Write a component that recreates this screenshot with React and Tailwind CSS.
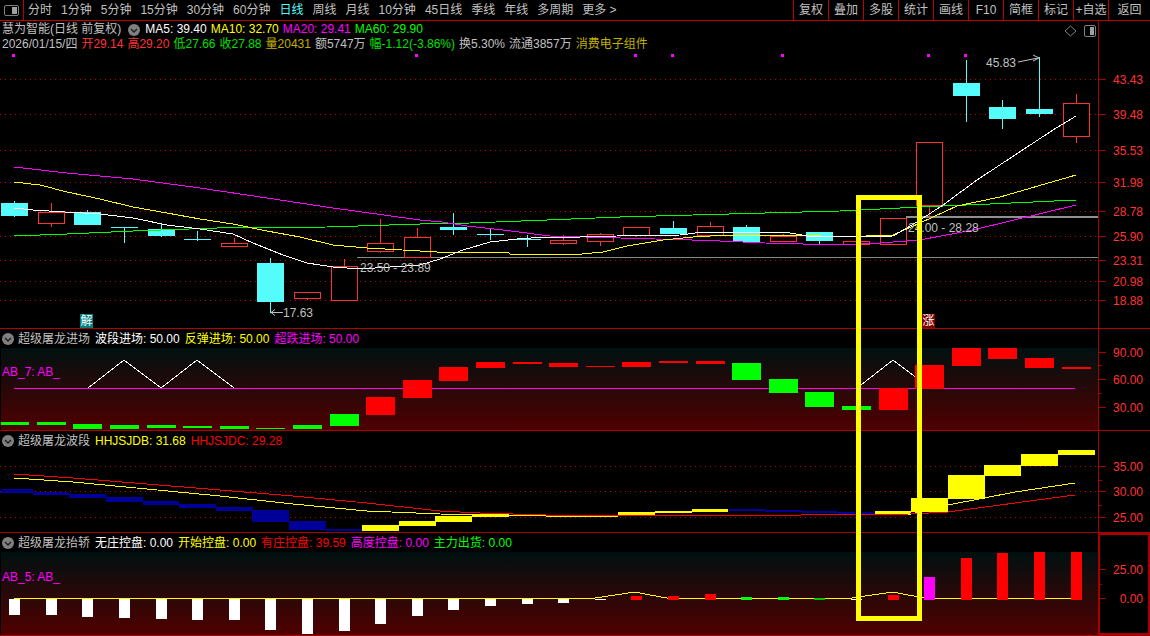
const RED = "#ff3232";
const CYAN = "#54fcfc";
const AXIS = "#a80000";

const tabs = ["分时", "1分钟", "5分钟", "15分钟", "30分钟", "60分钟", "日线", "周线", "月线", "10分钟", "45日线", "季线", "年线", "多周期", "更多 >"];
const tools = ["复权", "叠加", "多股", "统计", "画线", "F10", "简框", "标记", "+自选", "返回"];

// x, body top, body bottom, wick top, wick bottom
const upCandles = [
  [38, 212, 223, 203, 227],
  [221, 243, 246, 238, 246],
  [294, 292, 298, 292, 300],
  [331, 266, 300, 259, 301],
  [367, 243, 251, 219, 253],
  [404, 237, 257, 228, 257],
  [550, 240, 243, 235, 245],
  [587, 234, 241, 233, 246],
  [623, 227, 235, 227, 237],
  [697, 226, 235, 222, 235],
  [770, 236, 241, 234, 242],
  [843, 241, 244, 241, 244],
  [880, 218, 244, 218, 244],
  [916, 142, 205, 142, 219],
  [1063, 103, 136, 94, 143],
];
const downCandles = [
  [1, 203, 216, 201, 217],
  [74, 212, 225, 210, 225],
  [111, 227, 227, 227, 243],
  [148, 229, 236, 223, 237],
  [184, 239, 239, 231, 241],
  [257, 263, 302, 258, 313],
  [440, 227, 230, 213, 235],
  [477, 234, 234, 229, 240],
  [514, 239, 239, 235, 247],
  [660, 228, 234, 221, 234],
  [733, 227, 242, 225, 242],
  [806, 232, 241, 232, 244],
  [953, 83, 96, 60, 122],
  [989, 107, 119, 100, 129],
  [1026, 109, 114, 57, 117],
];

const ma5 = "14,208 33,210 65,212 100,214 133,218 167,225 200,229 233,234 253,243 283,255 307,263 333,267 360,269 420,265 440,259 463,250 490,242 517,239 545,237 580,237 617,236 680,235 703,232 765,232 790,233 813,237 893,236 917,222 943,205 977,180 1053,130 1076,116";
const ma10 = "14,182 40,185 67,192 100,199 133,207 167,213 200,219 233,224 267,231 300,237 333,245 367,248 420,251 437,252 508,252 510,254 582,254 603,252 627,246 663,240 693,237 728,235 802,235 840,237 893,235 920,223 957,206 1000,197 1076,175";
const ma20 = "14,167 67,173 133,179 200,188 267,198 333,208 420,220 442,222 467,226 503,230 550,236 620,238 655,239 692,240 720,241 765,243 840,245 880,243 920,240 973,230 1076,205";
const ma60 = "14,236 67,234 133,231 217,228 327,227 420,224 470,223 547,220 620,217 693,215 765,213 840,211 920,207 990,204 1076,200";

const priceGrid = [
  [79, "43.43"], [114, "39.48"], [150, "35.53"], [182, "31.98"], [211, "28.78"],
  [236, "25.90"], [260, "23.31"], [281, "20.98"], [300, "18.88"],
];
const markers = [13, 416, 635, 672, 782, 928, 965];

// x1, x2, top, bottom
const entryGreen = [
  [1, 29, 422, 425], [37, 66, 422, 425], [73, 102, 424, 429], [110, 139, 425, 429], [147, 176, 425, 428],
  [183, 212, 426, 428], [220, 249, 426, 429], [256, 285, 428, 429], [293, 322, 425, 429], [330, 359, 414, 426],
  [732, 761, 363, 380], [769, 798, 379, 393], [805, 834, 392, 407], [842, 871, 406, 410],
];
const entryRed = [
  [366, 395, 397, 415], [403, 432, 380, 398], [439, 468, 367, 381], [476, 505, 362, 368], [513, 542, 362, 364],
  [549, 578, 363, 367], [586, 615, 366, 367], [622, 651, 362, 367], [659, 688, 361, 363], [696, 725, 361, 364],
  [879, 908, 388, 410], [915, 944, 365, 389], [952, 981, 348, 366], [988, 1017, 348, 359], [1025, 1054, 358, 368],
  [1062, 1091, 367, 369],
];

const waveBlue = [
  [1, 33, 489, 493], [33, 69, 492, 495], [69, 106, 494, 498], [106, 143, 497, 502], [143, 179, 501, 505],
  [179, 216, 504, 508], [216, 253, 507, 511], [252, 289, 510, 522], [289, 326, 521, 530], [326, 362, 529, 531],
  [728, 765, 509, 511], [765, 802, 510, 512], [802, 838, 511, 513], [838, 875, 512, 514],
];
const waveYellow = [
  [362, 399, 525, 531], [399, 436, 521, 526], [435, 472, 516, 522], [472, 509, 514, 517], [546, 618, 515, 517],
  [618, 655, 512, 515], [655, 692, 511, 513], [692, 728, 509, 512], [875, 911, 511, 515], [911, 948, 498, 512],
  [948, 985, 475, 499], [984, 1021, 465, 476], [1021, 1058, 454, 466], [1058, 1095, 450, 455],
];

const liftWhite = [
  [9, 615], [46, 615], [82, 617], [119, 618], [156, 619], [192, 620], [229, 620], [265, 630], [302, 634],
  [339, 631], [375, 624], [412, 616], [448, 610], [485, 606], [522, 604], [558, 603], [595, 600], [851, 600],
];
// x, top, colour
const liftUp = [
  [631, 596, "#ff0000"], [668, 596, "#ff0000"], [705, 594, "#ff0000"], [741, 597, "#00ff00"], [778, 597, "#00ff00"],
  [814, 598, "#00c000"], [888, 595, "#ff0000"], [924, 577, "#ff00ff"], [961, 558, "#ff0000"], [997, 553, "#ff0000"],
  [1034, 552, "#ff0000"], [1071, 552, "#ff0000"],
];

const Chevron = () => (
  <svg width="12" height="12" viewBox="0 0 12 12" className="shrink-0">
    <circle cx="6" cy="6" r="6" fill="#808080" />
    <path d="M3 5l3 3 3-3" fill="none" stroke="#202020" strokeWidth="1.5" />
  </svg>
);

const Bars = ({ items, color }) =>
  items.map(([x1, x2, top, bottom]) => (
    <rect key={x1} x={x1} y={top} width={x2 - x1} height={bottom - top} fill={color} shapeRendering="crispEdges" />
  ));

const Line = ({ points, color }) => (
  <polyline points={points} fill="none" stroke={color} strokeWidth="1" shapeRendering="crispEdges" />
);

const Grid = ({ ys }) =>
  ys.map((y) => (
    <line key={y} x1="0" x2="1098" y1={y + 0.5} y2={y + 0.5} stroke="#c00000" strokeDasharray="1 4" shapeRendering="crispEdges" />
  ));

const Axis = ({ top, height, labels, minor = [], boxed }) => (
  <div className={`w-[52px] shrink-0 ${boxed ? "border-2" : "border-l"} border-[#a80000]`}>
    <svg width="52" height={height} viewBox={`${boxed ? 1100 : 1099} ${top} 52 ${height}`} className="block">
      {labels.map(([y, text]) => (
        <g key={y}>
          <line x1="1098" x2="1106" y1={y + 0.5} y2={y + 0.5} stroke={AXIS} shapeRendering="crispEdges" />
          <text x="1143" y={y + 5} textAnchor="end" fontSize="12" fill={RED}>{text}</text>
        </g>
      ))}
      {minor.map((y) => (
        <line key={y} x1="1098" x2="1102" y1={y + 0.5} y2={y + 0.5} stroke={AXIS} shapeRendering="crispEdges" />
      ))}
    </svg>
  </div>
);

const Toolbar = () => (
  <div className="flex h-[21px] shrink-0 items-center border-b border-[#c00000] text-[12px] text-[#c0c0c0]">
    <div className="flex h-full w-[24px] items-center justify-center border-r border-[#c00000]">
      <svg width="15" height="11" viewBox="0 0 15 11">
        <rect x="0.5" y="0.5" width="14" height="10" rx="1.5" fill="none" stroke="#808080" />
        <rect x="8" y="2" width="5" height="7" fill="#a0a0a0" />
      </svg>
    </div>
    <div className="ml-[4px] flex gap-[9px]">
      {tabs.map((tab) => (
        <span key={tab} className={tab === "日线" ? "text-[#54fcfc]" : ""}>{tab}</span>
      ))}
    </div>
    <div className="ml-auto flex h-full">
      {tools.map((tool) => (
        <span key={tool} className="flex h-full w-[35px] items-center justify-center border-l border-[#c00000] last:w-[42px]">{tool}</span>
      ))}
    </div>
  </div>
);

const Candles = () => (
  <g shapeRendering="crispEdges">
    {upCandles.map(([x, top, bottom, wickTop, wickBottom]) => (
      <g key={x}>
        <line x1={x + 13.5} x2={x + 13.5} y1={wickTop} y2={wickBottom} stroke={RED} />
        <rect x={x + 0.5} y={top + 0.5} width="26" height={bottom - top} fill="#000" stroke={RED} />
      </g>
    ))}
    {downCandles.map(([x, top, bottom, wickTop, wickBottom]) => (
      <g key={x}>
        <line x1={x + 13.5} x2={x + 13.5} y1={wickTop} y2={wickBottom} stroke={CYAN} />
        <rect x={x} y={top} width="27" height={Math.max(bottom - top, 1)} fill={CYAN} />
      </g>
    ))}
  </g>
);

const MainPanel = () => (
  <div className="flex h-[308px] shrink-0 border-b border-[#b00000]">
    <div className="relative flex-1 pt-[1px] text-[12px] leading-[15px]">
      <svg width="1098" height="307" viewBox="0 21 1098 307" className="absolute inset-0">
        <Grid ys={priceGrid.map(([y]) => y)} />
        {markers.map((x) => (
          <rect key={x} x={x - 1} y="54" width="3" height="3" fill="#ff00ff" />
        ))}
        <line x1="357" x2="1098" y1="257.5" y2="257.5" stroke="#888" shapeRendering="crispEdges" />
        <rect x="906" y="216" width="192" height="2" fill="#909090" />
        <Candles />
        <Line points={ma60} color="#00ff00" />
        <Line points={ma20} color="#ff00ff" />
        <Line points={ma10} color="#ffff00" />
        <Line points={ma5} color="#ffffff" />
        <g fontSize="12" fill="#c0c0c0">
          <text x="360" y="272">23.50 - 23.89</text>
          <text x="908" y="232">24.00 - 28.28</text>
          <text x="283" y="317">17.63</text>
          <text x="986" y="67">45.83</text>
        </g>
        <g fill="none" stroke="#c0c0c0">
          <path d="M271 312.5h12M275 309.5l-4 3 4 3" />
          <path d="M1018 62l20-4M1033 55l6 3-6 3" />
          <path d="M1070.5 26l5.5 5-5.5 5-5.5-5z" stroke="#808080" />
        </g>
        <rect x="1084.5" y="25.5" width="11" height="11" rx="1.5" fill="none" stroke="#808080" />
        <rect x="1090" y="27" width="4" height="8" fill="#a0a0a0" />
      </svg>
      <div className="relative flex items-center gap-[7px] pl-[2px] text-[#c0c0c0]">
        <span>慧为智能(日线 前复权)</span>
        <Chevron />
        <div className="ml-[-2px] flex gap-[4px]">
          <span className="text-white">MA5: 39.40</span>
          <span className="text-[#ffff00]">MA10: 32.70</span>
          <span className="text-[#ff00ff]">MA20: 29.41</span>
          <span className="text-[#00ff00]">MA60: 29.90</span>
        </div>
      </div>
      <div className="relative flex gap-[4px] pl-[2px] text-[#c0c0c0]">
        <span>2026/01/15/四</span>
        <span className="text-[#ff3232]">开29.14</span>
        <span className="text-[#ff3232]">高29.20</span>
        <span className="text-[#00e000]">低27.66</span>
        <span className="text-[#00e000]">收27.88</span>
        <span className="text-[#c0b000]">量20431</span>
        <span>额5747万</span>
        <span className="text-[#00e000]">幅-1.12(-3.86%)</span>
        <span>换5.30%</span>
        <span>流通3857万</span>
        <span className="text-[#c0b000]">消费电子组件</span>
      </div>
      <span className="absolute left-[80px] top-[293px] flex h-[14px] w-[13px] items-center justify-center bg-[#008080] text-white">解</span>
      <span className="absolute left-[922px] top-[293px] flex h-[14px] w-[13px] items-center justify-center bg-[#800000] text-white">涨</span>
    </div>
    <Axis top={21} height={307} labels={priceGrid} />
  </div>
);

const Legend = ({ name, items }) => (
  <div className="relative flex h-[19px] items-center gap-[5px] pl-[2px] text-[12px] text-[#c0c0c0]">
    <Chevron />
    <span className="ml-[-1px]">{name}</span>
    {items.map(([text, color]) => (
      <span key={text} className={color}>{text}</span>
    ))}
  </div>
);

const EntryPanel = () => (
  <div className="flex h-[102px] shrink-0 border-b border-[#a80000]">
    <div className="relative flex flex-1 flex-col">
      <Legend
        name="超级屠龙进场"
        items={[
          ["波段进场: 50.00", "text-white"],
          ["反弹进场: 50.00", "text-[#ffff00]"],
          ["超跌进场: 50.00", "text-[#ff00ff]"],
        ]}
      />
      <div className="ml-[1px] flex-1 bg-linear-to-b/srgb from-[#001010] to-[#500000]" />
      <svg width="1098" height="101" viewBox="0 329 1098 101" className="absolute inset-0">
        <Line points="14,388 1075,388" color="#ff00ff" />
        <Line points="88,388 124,360 161,388 197,360 234,388" color="#ffffff" />
        <Line points="857,388 893,360 930,388" color="#ffffff" />
        <Bars items={entryGreen} color="#00ff00" />
        <Bars items={entryRed} color="#ff0000" />
        <text x="2" y="376" fontSize="12" fill="#ff00ff">AB_7: AB_</text>
      </svg>
    </div>
    <Axis top={329} height={101} labels={[[352, "90.00"], [379, "60.00"], [407, "30.00"]]} minor={[365, 393]} />
  </div>
);

const WavePanel = () => (
  <div className="flex h-[102px] shrink-0 border-b border-[#a80000]">
    <div className="relative flex-1">
      <svg width="1098" height="101" viewBox="0 431 1098 101" className="absolute inset-0">
        <Grid ys={[466, 491, 517]} />
        <Bars items={waveBlue} color="#000099" />
        <Bars items={waveYellow} color="#ffff00" />
        <Line points="14,478 73,482 147,489 220,496 293,504 367,511 440,514 575,516 801,515 911,514 948,505 1015,492 1075,483" color="#ffff00" />
        <Line points="14,474 73,478 147,484 220,490 293,496 367,503 440,511 480,513 546,515 801,515 910,514 948,512 1015,503 1075,495" color="#ff0000" />
      </svg>
      <Legend
        name="超级屠龙波段"
        items={[
          ["HHJSJDB: 31.68", "text-[#ffff00]"],
          ["HHJSJDC: 29.28", "text-[#ff0000]"],
        ]}
      />
    </div>
    <Axis top={431} height={101} labels={[[466, "35.00"], [491, "30.00"], [517, "25.00"]]} minor={[480, 505]} />
  </div>
);

const LiftPanel = () => (
  <div className="flex h-[103px] shrink-0 border-b border-[#a80000]">
    <div className="relative flex flex-1 flex-col">
      <Legend
        name="超级屠龙抬轿"
        items={[
          ["无庄控盘: 0.00", "text-white"],
          ["开始控盘: 0.00", "text-[#ffff00]"],
          ["有庄控盘: 39.59", "text-[#ff0000]"],
          ["高度控盘: 0.00", "text-[#ff00ff]"],
          ["主力出货: 0.00", "text-[#00ff00]"],
        ]}
      />
      <div className="ml-[1px] flex-1 bg-linear-to-b/srgb from-[#001010] to-[#500000]" />
      <svg width="1098" height="102" viewBox="0 533 1098 102" className="absolute inset-0">
        <Line points="14,598 595,598 615,595 635,592 650,595 667,598 852,598 872,595 893,592 908,595 925,598 1075,598" color="#ffff00" />
        {liftWhite.map(([x, bottom]) => (
          <rect key={x} x={x} y="599" width="11" height={bottom - 599} fill="#fff" shapeRendering="crispEdges" />
        ))}
        {liftUp.map(([x, top, color]) => (
          <rect key={x} x={x} y={top} width="11" height={600 - top} fill={color} shapeRendering="crispEdges" />
        ))}
        <text x="2" y="581" fontSize="12" fill="#ff00ff">AB_5: AB_</text>
      </svg>
    </div>
    <Axis top={535} height={98} labels={[[569, "25.00"], [598, "0.00"]]} minor={[584]} boxed />
  </div>
);

export default function App() {
  return (
    <div className="relative flex h-[636px] w-[1150px] flex-col overflow-hidden bg-black font-['Liberation_Sans','Noto_Sans_CJK_SC',sans-serif]">
      <Toolbar />
      <MainPanel />
      <EntryPanel />
      <WavePanel />
      <LiftPanel />
      {/* hand drawn highlight box over the charts */}
      <div className="absolute left-[856px] top-[195px] h-[426px] w-[66px] border-[5px] border-[#ffff00]" />
    </div>
  );
}
